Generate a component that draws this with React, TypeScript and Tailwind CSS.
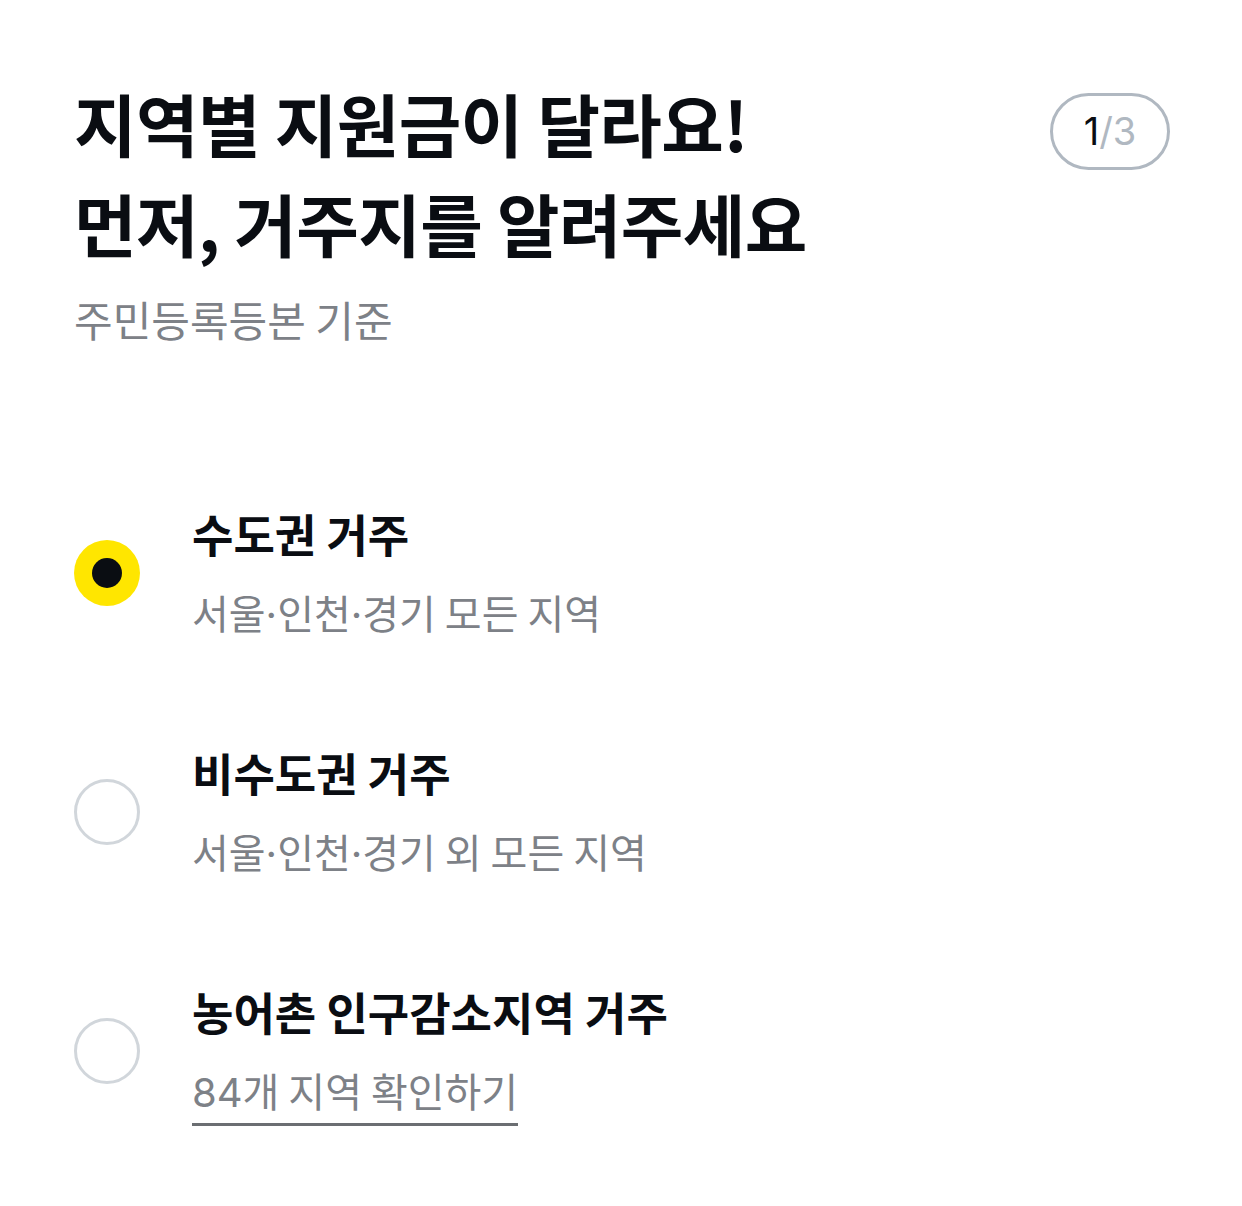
import React, { useState } from 'react';

const Dot = () => <span className="font-['Inter']">·</span>;

const OPTIONS = [
  {
    id: 'metro',
    title: '수도권 거주',
    desc: <>서울<Dot />인천<Dot />경기 모든 지역</>,
    link: false,
  },
  {
    id: 'nonmetro',
    title: '비수도권 거주',
    desc: <>서울<Dot />인천<Dot />경기 외 모든 지역</>,
    link: false,
  },
  {
    id: 'rural',
    title: '농어촌 인구감소지역 거주',
    desc: <><span className="font-['Inter']">84</span>개 지역 확인하기</>,
    link: true,
  },
];

const Radio = ({ checked }: { checked: boolean }) =>
  checked ? (
    <div className="mt-[36px] w-[66px] h-[66px] rounded-full bg-[#ffe600] flex items-center justify-center shrink-0">
      <div className="w-[30px] h-[30px] rounded-full bg-[#0a0d12]" />
    </div>
  ) : (
    <div className="mt-[36px] w-[66px] h-[66px] rounded-full border-[3px] border-[#d1d6db] bg-white shrink-0" />
  );

export default function App() {
  const [selected, setSelected] = useState('metro');

  return (
    <div
      className="w-[1242px] h-[1206px] bg-white text-[#0a0d12] pl-[74px] pr-[72px] pt-[73px]"
      style={{ fontFamily: '"Noto Sans CJK KR", "Noto Sans", sans-serif' }}
    >
      <div className="flex justify-between items-start">
        <h1 className="text-[68px] leading-[100px] font-bold tracking-[-0.6px]">
          지역별 지원금이 달라요!
          <br />
          먼저, 거주지를 알려주세요
        </h1>
        <div className="mt-[20px] w-[120px] h-[77px] rounded-full border-[3px] border-[#b0b8c1] flex items-center justify-center text-[38px] font-['Inter']">
          <span className="text-[#0a0d12]">1</span>
          <span className="text-[#b0b8c1]">/3</span>
        </div>
      </div>
      <p className="mt-[16px] text-[42px] leading-[60px] text-[#7d8187]">주민등록등본 기준</p>

      <div className="mt-[155px] flex flex-col gap-[98px]">
        {OPTIONS.map((o) => (
          <button
            key={o.id}
            onClick={() => setSelected(o.id)}
            className="flex items-start gap-[52px] text-left"
          >
            <Radio checked={selected === o.id} />
            <div className="flex flex-col gap-[18px]">
              <span className="text-[45px] leading-[60px] font-bold">{o.title}</span>
              {o.link ? (
                <span className="self-start text-[40px] leading-[60px] text-[#7d8187] border-b-[3px] border-[#6b6e72]">
                  {o.desc}
                </span>
              ) : (
                <span className="text-[40px] leading-[60px] text-[#7d8187]">{o.desc}</span>
              )}
            </div>
          </button>
        ))}
      </div>
    </div>
  );
}
